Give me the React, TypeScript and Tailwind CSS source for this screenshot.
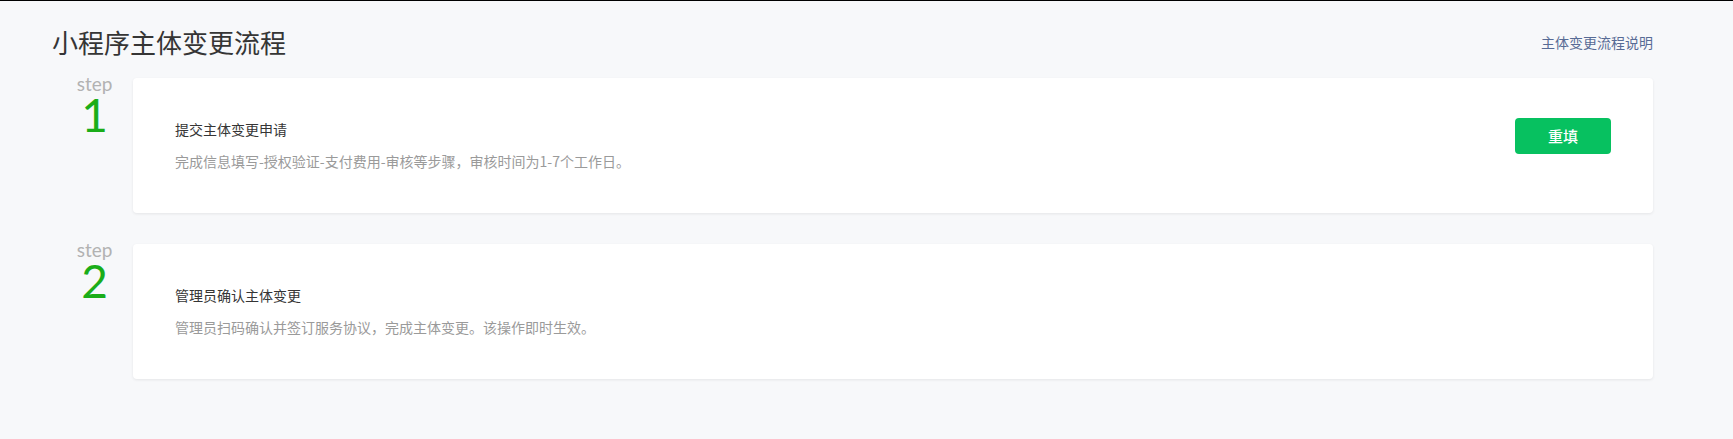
const steps = [
  {
    no: 1,
    title: '提交主体变更申请',
    desc: '完成信息填写-授权验证-支付费用-审核等步骤，审核时间为1-7个工作日。',
    action: '重填',
  },
  {
    no: 2,
    title: '管理员确认主体变更',
    desc: '管理员扫码确认并签订服务协议，完成主体变更。该操作即时生效。',
  },
];

const cjk = { fontFamily: '"Noto Sans CJK SC", "Noto Sans", sans-serif' };
const latin = { fontFamily: 'Lato, "Noto Sans", sans-serif' };

export default function App() {
  return (
    <div className="min-h-screen w-full bg-[#f7f8fa] border-t border-black" style={cjk}>
      <div className="pl-[52px] pr-[80px] pt-[21px] pb-[40px]">
        {/* Header */}
        <div className="flex items-center justify-between h-[40px]">
          <h1 className="text-[26px] leading-[40px] text-[#353535] font-normal">
            小程序主体变更流程
          </h1>
          <a href="#" className="text-[14px] leading-[20px] text-[#576b95]">
            主体变更流程说明
          </a>
        </div>

        {/* Steps */}
        <div className="mt-[16px] flex flex-col gap-[31px]">
          {steps.map((s) => (
            <div key={s.no} className="flex">
              <div className="w-[81px] shrink-0 flex flex-col items-center pl-[4px]" style={latin}>
                <span className="text-[19px] leading-[16px] -mt-[2px] text-[#b2b2b2]">step</span>
                <span className="text-[46px] leading-[40px] mt-[3px] text-[#1aad19]">{s.no}</span>
              </div>
              <div className="flex-1 bg-white rounded-[4px] shadow-[0_1px_3px_rgba(0,0,0,0.08)] px-[42px] pt-[40px] pb-[42px] flex justify-between items-start">
                <div className="pt-[1px]">
                  <div className="text-[14px] leading-[20px] text-[#353535]">{s.title}</div>
                  <div className="mt-[12px] text-[14px] leading-[20px] text-[#9a9a9a]">{s.desc}</div>
                </div>
                {s.action && (
                  <button className="w-[96px] h-[36px] rounded-[4px] bg-[#07c160] text-white text-[15px] font-medium">
                    {s.action}
                  </button>
                )}
              </div>
            </div>
          ))}
        </div>
      </div>
    </div>
  );
}
